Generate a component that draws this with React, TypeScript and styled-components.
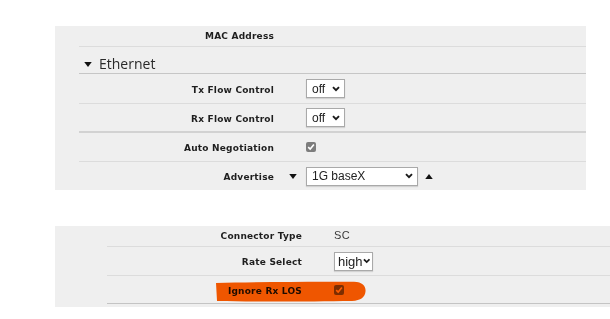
import React from "react";
import styled, { createGlobalStyle } from "styled-components";

const GlobalStyle = createGlobalStyle`
  html, body { margin: 0; padding: 0; background: #ffffff; }
  body { font-family: "DejaVu Sans", Verdana, sans-serif; color: #222; }
`;

const Page = styled.div`
  width: 610px;
  height: 319px;
  overflow: hidden;
  padding: 26px 0 0 55px;
  box-sizing: border-box;
  display: flex;
  flex-direction: column;
  gap: 36px;
`;

const Panel = styled.section<{ $indent: number; $width?: number }>`
  background: #efefef;
  padding-left: ${(p) => p.$indent}px;
  width: ${(p) => (p.$width ? `${p.$width}px` : "auto")};
  margin-right: ${(p) => (p.$width ? "0" : "-10px")};
  box-sizing: border-box;
  display: flex;
  flex-direction: column;
  position: relative;
`;

const Row = styled.div<{ $h: number; $line?: "none" | "light" | "dark" | "double"; $pb?: number }>`
  display: grid;
  grid-template-columns: 195px 1fr;
  align-items: center;
  height: ${(p) => p.$h}px;
  padding-bottom: ${(p) => p.$pb ?? 0}px;
  box-sizing: content-box;
  border-bottom: ${(p) =>
    p.$line === "none"
      ? "none"
      : p.$line === "dark"
      ? "1px solid #c4c4c4"
      : p.$line === "double"
      ? "2px solid #d2d2d2"
      : "1px solid #dcdcdc"};
`;

const Label = styled.div`
  text-align: right;
  font-family: "DejaVu Sans", Verdana, sans-serif;
  font-weight: bold;
  font-size: 9px;
  letter-spacing: 0.2px;
  color: #1e1e1e;
  white-space: nowrap;
  padding-top: 2px;
`;

const Value = styled.div`
  display: flex;
  align-items: center;
  padding-left: 14px;
`;

const Lead = styled.span<{ $after?: boolean }>`
  width: 17px;
  flex: none;
  display: flex;
  align-items: center;
  justify-content: flex-start;
  padding-left: ${(p) => (p.$after ? 7 : 1)}px;
`;

const Heading = styled.div`
  height: 27px;
  display: flex;
  align-items: flex-end;
  padding: 0 0 0 5px;
  box-sizing: border-box;
  border-bottom: 1px solid #c6c6c6;
  gap: 7px;
`;

const HeadingArrow = styled.span`
  display: flex;
  align-items: center;
  height: 18px;
`;

const HeadingText = styled.span`
  font-family: "Open Sans", "Liberation Sans", sans-serif;
  font-size: 14px;
  font-weight: 400;
  color: #2a2a2a;
  line-height: 18px;
`;

const SelectBox = styled.div<{ $w: number; $big?: boolean }>`
  width: ${(p) => p.$w}px;
  height: ${(p) => (p.$big ? 19 : 19)}px;
  box-sizing: border-box;
  background: #ffffff;
  border: 1px solid #a9a9a9;
  box-shadow: 0 1px 1px rgba(0, 0, 0, 0.12);
  display: flex;
  align-items: center;
  justify-content: space-between;
  padding: 0 ${(p) => (p.$big ? 2 : 4)}px 0 ${(p) => (p.$big ? 3 : 5)}px;
  font-family: "Liberation Sans", Arial, sans-serif;
  font-size: ${(p) => (p.$big ? 13 : 12)}px;
  color: #222;
`;

const Check = styled.span`
  width: 10px;
  height: 10px;
  border-radius: 2px;
  background: #7d7d7d;
  display: inline-flex;
  align-items: center;
  justify-content: center;
`;

const Plain = styled.span`
  font-family: "Liberation Sans", Arial, sans-serif;
  font-size: 11px;
  color: #3a3a3a;
  letter-spacing: 0.3px;
`;

const Marker = styled.svg`
  position: absolute;
  left: 161px;
  top: 55px;
  width: 150px;
  height: 21px;
  mix-blend-mode: multiply;
  pointer-events: none;
`;

const Chevron = () => (
  <svg width="8" height="6" viewBox="0 0 8 6">
    <path d="M1 1.2 L4 4.2 L7 1.2" fill="none" stroke="#1a1a1a" strokeWidth="1.9" />
  </svg>
);

const Tri = ({ up, small }: { up?: boolean; small?: boolean }) => (
  <svg width={small ? 8 : 9} height={small ? 5 : 6} viewBox="0 0 9 6">
    <path d={up ? "M0 6 L4.5 0 L9 6 Z" : "M0 0 L9 0 L4.5 6 Z"} fill="#111" />
  </svg>
);

const Tick = () => (
  <svg width="8" height="8" viewBox="0 0 8 8">
    <path d="M1.2 4.2 L3.2 6.1 L6.9 1.6" fill="none" stroke="#ffffff" strokeWidth="1.6" />
  </svg>
);

export default function App() {
  return (
    <>
      <GlobalStyle />
      <Page>
        <Panel $indent={24} $width={531}>
          <Row $h={17} $pb={3}>
            <Label>MAC Address</Label>
            <Value />
          </Row>
          <Heading>
            <HeadingArrow>
              <Tri small />
            </HeadingArrow>
            <HeadingText>Ethernet</HeadingText>
          </Heading>
          <Row $h={29}>
            <Label>Tx Flow Control</Label>
            <Value>
              <Lead />
              <SelectBox $w={39}>
                <span>off</span>
                <Chevron />
              </SelectBox>
            </Value>
          </Row>
          <Row $h={27} $line="double">
            <Label>Rx Flow Control</Label>
            <Value>
              <Lead />
              <SelectBox $w={39}>
                <span>off</span>
                <Chevron />
              </SelectBox>
            </Value>
          </Row>
          <Row $h={28}>
            <Label>Auto Negotiation</Label>
            <Value>
              <Lead />
              <Check>
                <Tick />
              </Check>
            </Value>
          </Row>
          <Row $h={28} $line="none">
            <Label>Advertise</Label>
            <Value>
              <Lead>
                <Tri small />
              </Lead>
              <SelectBox $w={112}>
                <span>1G baseX</span>
                <Chevron />
              </SelectBox>
              <Lead $after>
                <Tri up small />
              </Lead>
            </Value>
          </Row>
        </Panel>

        <Panel $indent={52}>
          <Row $h={18} $pb={2}>
            <Label>Connector Type</Label>
            <Value>
              <Lead />
              <Plain>SC</Plain>
            </Value>
          </Row>
          <Row $h={28}>
            <Label>Rate Select</Label>
            <Value>
              <Lead />
              <SelectBox $w={39} $big>
                <span>high</span>
                <Chevron />
              </SelectBox>
            </Value>
          </Row>
          <Row $h={27} $line="dark">
            <Label>Ignore Rx LOS</Label>
            <Value>
              <Lead />
              <Check>
                <Tick />
              </Check>
            </Value>
          </Row>
          <Row $h={3} $line="none">
            <span />
            <span />
          </Row>
          <Marker viewBox="0 0 150 21" preserveAspectRatio="none">
            <path
              d="M0 2 C 40 1, 100 0.3, 138 0.8 C 147 1.1, 150 5.5, 149.5 10.5 C 149 16, 145 19.6, 136 19.9 C 95 20.5, 40 20.8, 1 20 Z"
              fill="#ff5c00"
            />
          </Marker>
        </Panel>
      </Page>
    </>
  );
}
